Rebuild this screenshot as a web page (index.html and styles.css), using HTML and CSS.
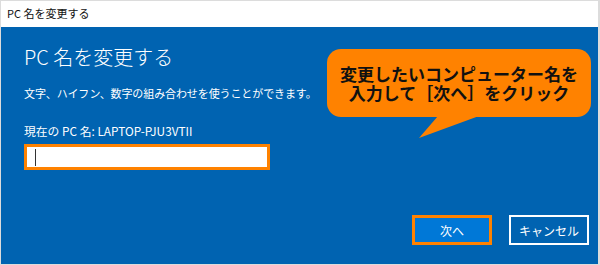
FILE: index.html
```html
<!DOCTYPE html>
<html lang="ja">
<head>
  <meta charset="UTF-8">
  <meta name="viewport" content="width=device-width, initial-scale=1.0">
  <title>PC 名を変更する</title>
  <link rel="stylesheet" href="styles.css">
</head>
<body>
  <div class="window">
    <div class="titlebar">PC 名を変更する</div>

    <div class="content">
      <h1>PC 名を変更する</h1>
      <p class="desc">文字、ハイフン、数字の組み合わせを使うことができます。</p>
      <p class="current">現在の PC 名: LAPTOP-PJU3VTII</p>
      <div class="name-input"><span class="caret"></span></div>

      <div class="actions">
        <button class="btn btn-next">次へ</button>
        <button class="btn btn-cancel">キャンセル</button>
      </div>
    </div>

    <!-- 吹き出し -->
    <div class="callout">
      <div class="callout-box">
        <span>変更したいコンピューター名を</span>
        <span>入力して［次へ］をクリック</span>
      </div>
      <svg class="callout-tail" width="64" height="24" viewBox="0 0 64 24">
        <polygon points="19,0 60,0 0,22" fill="#ff8200"/>
      </svg>
    </div>
  </div>
</body>
</html>
```

FILE: styles.css
```css
body {
  margin: 0;
  padding: 0;
  font-family: "Noto Sans CJK JP", "Noto Sans", sans-serif;
}

.window {
  position: relative;
  width: 600px;
  height: 265px;
  box-sizing: border-box;
  border: 1px solid #dcdcdc;
  border-right-width: 2px;
  display: flex;
  flex-direction: column;
}

.titlebar {
  height: 26px;
  line-height: 25px;
  padding-left: 6px;
  font-size: 11px;
  color: #111;
  background: #fff;
}

.content {
  flex: 1;
  background: #0063b1;
  color: #fff;
  padding: 16px 9px 19px 23px;
  display: flex;
  flex-direction: column;
}

h1 {
  margin: 0;
  font-size: 20px;
  font-weight: 300;
  line-height: 28px;
}

.desc {
  margin: 13px 0 0;
  font-size: 11px;
  line-height: 18px;
  letter-spacing: -0.1px;
}

.current {
  margin: 20px 0 0;
  font-size: 11.8px;
  line-height: 18px;
}

.name-input {
  margin-top: 4px;
  width: 246px;
  height: 26px;
  box-sizing: border-box;
  background: #fff;
  border: 3px solid #ff8200;
  display: flex;
  align-items: center;
  padding-left: 8px;
}

.caret {
  width: 1px;
  height: 17px;
  background: #333;
}

.actions {
  margin-top: auto;
  display: flex;
  justify-content: flex-end;
  gap: 17px;
}

.btn {
  width: 80px;
  height: 30px;
  box-sizing: border-box;
  font-family: inherit;
  font-size: 12px;
  color: #fff;
  cursor: pointer;
}

.btn-next {
  background: #0078d7;
  border: 3px solid #ff8200;
}

.btn-cancel {
  background: #0063b1;
  border: 2px solid #fff;
}

.callout {
  position: absolute;
  left: 326px;
  top: 48px;
}

.callout-box {
  width: 264px;
  height: 68px;
  background: #ff8200;
  border-radius: 14px;
  color: #111;
  font-size: 17px;
  font-weight: bold;
  line-height: 19px;
  display: flex;
  flex-direction: column;
  align-items: center;
  justify-content: center;
}

.callout-tail {
  display: block;
  margin: -1px 0 0 92px;
}
```
